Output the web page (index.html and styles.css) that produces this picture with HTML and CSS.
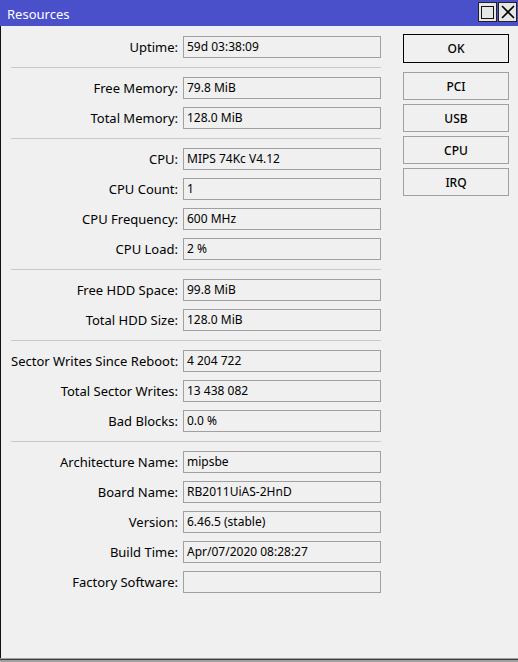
FILE: index.html
```html
<!DOCTYPE html>
<html>
<head>
<meta charset="utf-8">
<title>Resources</title>
<link rel="stylesheet" href="styles.css">
</head>
<body>
<div class="window">
	<div class="titlebar">
		<span class="title">Resources</span>
		<span class="tbtn max"><i></i></span>
		<span class="tbtn close">
			<svg width="14" height="14" viewBox="0 0 14 14"><path d="M1 1L13 13M13 1L1 13" stroke="#000" stroke-width="1.6"/></svg>
		</span>
	</div>
	<div class="main">
		<div class="form">
			<div class="group">
				<div class="row"><label>Uptime:</label><div class="field">59d 03:38:09</div></div>
			</div>
			<div class="group">
				<div class="row"><label>Free Memory:</label><div class="field">79.8 MiB</div></div>
				<div class="row"><label>Total Memory:</label><div class="field">128.0 MiB</div></div>
			</div>
			<div class="group">
				<div class="row"><label>CPU:</label><div class="field">MIPS 74Kc V4.12</div></div>
				<div class="row"><label>CPU Count:</label><div class="field">1</div></div>
				<div class="row"><label>CPU Frequency:</label><div class="field">600 MHz</div></div>
				<div class="row"><label>CPU Load:</label><div class="field">2 %</div></div>
			</div>
			<div class="group">
				<div class="row"><label>Free HDD Space:</label><div class="field">99.8 MiB</div></div>
				<div class="row"><label>Total HDD Size:</label><div class="field">128.0 MiB</div></div>
			</div>
			<div class="group">
				<div class="row"><label>Sector Writes Since Reboot:</label><div class="field">4 204 722</div></div>
				<div class="row"><label>Total Sector Writes:</label><div class="field">13 438 082</div></div>
				<div class="row"><label>Bad Blocks:</label><div class="field">0.0 %</div></div>
			</div>
			<div class="group">
				<div class="row"><label>Architecture Name:</label><div class="field">mipsbe</div></div>
				<div class="row"><label>Board Name:</label><div class="field">RB2011UiAS-2HnD</div></div>
				<div class="row"><label>Version:</label><div class="field">6.46.5 (stable)</div></div>
				<div class="row"><label>Build Time:</label><div class="field">Apr/07/2020 08:28:27</div></div>
				<div class="row"><label>Factory Software:</label><div class="field"></div></div>
			</div>
		</div>
		<div class="buttons">
			<button class="btn ok">OK</button>
			<button class="btn">PCI</button>
			<button class="btn">USB</button>
			<button class="btn">CPU</button>
			<button class="btn">IRQ</button>
		</div>
	</div>
	<div class="frame-bottom"></div>
</div>
</body>
</html>
```
FILE: styles.css
```css
*{ margin:0; padding:0; box-sizing:border-box;}
body{ width:518px; height:662px; overflow:hidden; background:#f0f0f0; font-family:"Noto Sans","Open Sans",sans-serif; font-size:12px; color:#000;}
.window{ display:flex; flex-direction:column; height:662px;}
.titlebar{ height:26px; background:#4a4fca; display:flex; align-items:flex-start; padding:2px 1px 0 7px;}
.title{ flex:1; color:#fff; font-size:13px; line-height:24px;}
.tbtn{ width:19px; height:20px; background:#e6e6e6; border:1px solid #222; display:flex; align-items:center; justify-content:center; margin-left:1px;}
.tbtn.max i{ display:block; width:13px; height:13px; border:1.5px solid #111;}
.main{ flex:1; display:flex; border-left:1px solid #111; padding-left:10px;}
.form{ width:370px; padding-top:10px;}
.group{ display:flex; flex-direction:column; gap:8px; padding:9px 0;}
.group:first-child{ padding-top:0;}
.group + .group{ border-top:1px solid #c8c8c8;}
.row{ display:flex; align-items:center; height:22px;}
.row label{ width:167px; margin-right:5px; text-align:right; white-space:nowrap; font-size:13px;}
.field{ width:198px; height:22px; border:1px solid #a0a0a0; padding-left:3px; line-height:20px; white-space:nowrap; overflow:hidden;}
.buttons{ margin-left:22px; padding-top:8px; display:flex; flex-direction:column; gap:4px;}
.btn{ width:106px; height:28px; background:#f0f0f0; border:1px solid #a0a0a0; font:inherit; font-weight:500; color:#000;}
.btn.ok{ height:29px; border-color:#000; margin-bottom:5px;}
.frame-bottom{ height:4px; background:linear-gradient(#a0a0a0 0 1px,#404040 1px 2px,#a0a0a0 2px);}
```
